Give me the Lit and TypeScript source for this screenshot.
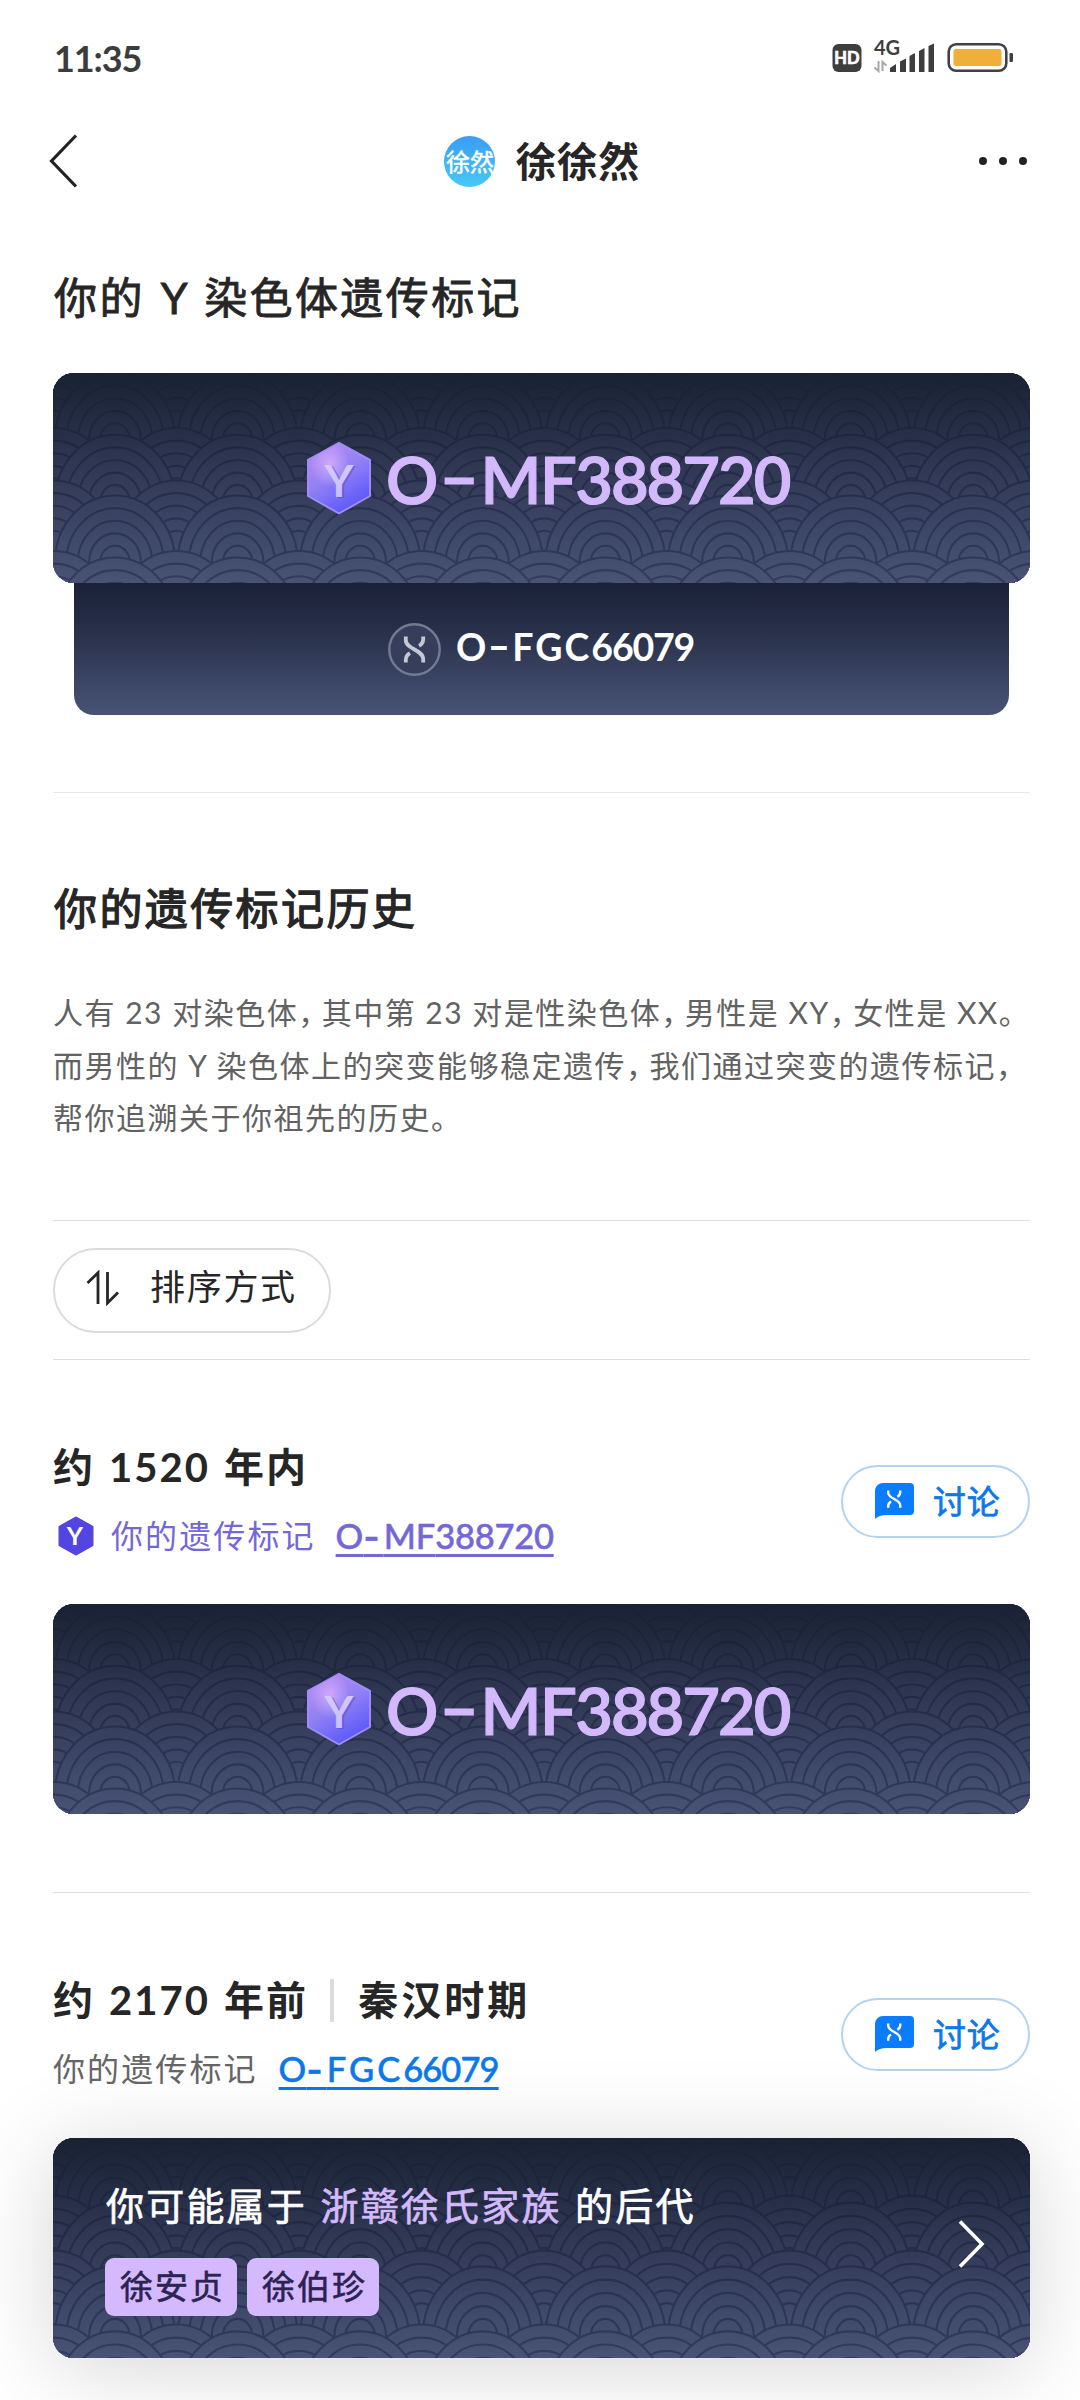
import { LitElement, html, svg, css } from "lit";
import { customElement, property } from "lit/decorators.js";

const helix = svg`
  <path d="M1.8 0 V3.4 C1.8 13 19.2 13 19.2 22.6 V26" />
  <path d="M19.2 0 V2.6 C19.2 6 17.6 8 15 9.4" />
  <path d="M1.8 26 V23.4 C1.8 20 3.4 18 6 16.6" />
`;

/* Splits "O-MF388720" into its haplogroup, letters and digits, which are spaced separately. */
const markerCode = (code: string) => {
  const [head, tail] = code.split("-");
  const letters = tail.replace(/\d/g, "");
  const digits = tail.replace(/\D/g, "");
  return html`${head}<span class="dash">-</span><span class="letters">${letters}</span><span class="digits">${digits}</span>`;
};

/* Seigaiha waves: rows are painted back to front, each arc hides the row behind it. */
const ROWS: Array<[number, boolean]> = [
  [-62, false], [-13, true], [0, false], [55, true], [61.7, false],
  [107.5, true], [122.5, false], [178, true], [184.5, false],
];
const RINGS = [1, 0.81, 0.62, 0.43, 0.245];
const PITCH = 122.6;

@customElement("wave-pattern")
class WavePattern extends LitElement {
  static styles = css`
    :host { position: absolute; inset: 0; display: block; }
    svg { display: block; width: 100%; height: 100%; }
  `;
  render() {
    const arcs = ROWS.map(([top, shifted]) => {
      const row = [];
      for (let i = -1; i < 9; i++) {
        const cx = 62 + i * PITCH + (shifted ? PITCH / 2 : 0);
        for (const k of RINGS) {
          row.push(svg`<ellipse cx=${cx} cy=${top + 66.5} rx=${60 * k} ry=${66.5 * k} />`);
        }
      }
      return row;
    });
    return html`
      <svg viewBox="0 0 977 210" preserveAspectRatio="none">
        <defs>
          <linearGradient id="f" gradientUnits="userSpaceOnUse" x1="0" y1="0" x2="0" y2="210">
            <stop offset="0" stop-color="#192133" />
            <stop offset="0.5" stop-color="#323a57" />
            <stop offset="1" stop-color="#485375" />
          </linearGradient>
          <linearGradient id="s" gradientUnits="userSpaceOnUse" x1="0" y1="0" x2="0" y2="210">
            <stop offset="0" stop-color="#192133" />
            <stop offset="0.3" stop-color="#1f2640" />
            <stop offset="0.6" stop-color="#282f4d" />
            <stop offset="1" stop-color="#333b5f" />
          </linearGradient>
        </defs>
        <rect width="977" height="210" fill="url(#f)" />
        <g fill="url(#f)" stroke="url(#s)" stroke-width="2.1">${arcs}</g>
      </svg>
    `;
  }
}

@customElement("marker-card")
class MarkerCard extends LitElement {
  @property() code = "";
  static styles = css`
    :host { display: block; position: relative; height: 210px; border-radius: 21px; overflow: hidden; }
    .row { position: relative; display: flex; align-items: center; height: 100%; box-sizing: border-box; padding: 0 0 0 249px; }
    .hex { width: 74px; height: 86px; display: block; }
    .code { margin-left: 10px; padding-top: 1px; font-size: 65px; line-height: 80px; font-weight: 600; color: #d3b9fb; -webkit-text-stroke: 1.2px; white-space: nowrap; }
    .dash { display: inline-block; margin: 0 9px; transform: translateY(-0.04em) scaleX(1.65); }
    .letters { letter-spacing: -1.5px; }
    .digits { letter-spacing: -2px; }
    text { font-family: Lato, sans-serif; font-weight: 700; }
  `;
  render() {
    return html`
      <wave-pattern></wave-pattern>
      <div class="row">
        <svg class="hex" viewBox="0 0 74 86">
          <defs>
            <linearGradient id="h" x1="0.2" y1="0.05" x2="0.7" y2="1">
              <stop offset="0" stop-color="#b98af2" />
              <stop offset="0.45" stop-color="#9180f4" />
              <stop offset="1" stop-color="#5654fb" />
            </linearGradient>
            <radialGradient id="g" cx="0.35" cy="0.3" r="0.32">
              <stop offset="0" stop-color="#dcb4ff" stop-opacity="0.75" />
              <stop offset="1" stop-color="#dcb4ff" stop-opacity="0" />
            </radialGradient>
            <linearGradient id="y" x1="0" y1="0" x2="0" y2="1">
              <stop offset="0" stop-color="#d9cdfb" />
              <stop offset="1" stop-color="#c3bcff" />
            </linearGradient>
          </defs>
          <path d="M37 8 L68 25 V61 L37 78.500 L6 61 V25 Z" fill="url(#h)" stroke="#a08cf8" stroke-width="2" stroke-linejoin="round" />
          <path d="M37 8 L68 25 V61 L37 78.500 L6 61 V25 Z" fill="url(#g)" />
          <text x="39" y="62.500" font-size="44.500" text-anchor="middle" fill="#5a48c8" opacity="0.5">Y</text>
          <text x="37" y="61.500" font-size="44.500" text-anchor="middle" fill="url(#y)">Y</text>
        </svg>
        <div class="code">${markerCode(this.code)}</div>
      </div>
    `;
  }
}

@customElement("discuss-button")
class DiscussButton extends LitElement {
  static styles = css`
    :host { display: block; }
    .pill { display: flex; align-items: center; box-sizing: border-box; width: 189px; height: 73px; border: 2px solid #b4d3ee; border-radius: 37px; padding-left: 32px; background: #fff; }
    svg { width: 39px; height: 36px; display: block; }
    .label { margin-left: 19px; font-size: 33px; line-height: 40px; letter-spacing: 0.8px; color: #0b79ec; -webkit-text-stroke: 0.7px #0b79ec; }
  `;
  render() {
    return html`
      <div class="pill">
        <svg viewBox="0 0 39 36">
          <path d="M8 0 H35 A4 4 0 0 1 39 4 V28 A4 4 0 0 1 35 32 H12 Q4 32 0 36 V8 A8 8 0 0 1 8 0 Z" fill="#0a7cff" />
          <g transform="translate(12 7.500) scale(0.69 0.66)" fill="none" stroke="#fff" stroke-width="3.400">${helix}</g>
        </svg>
        <div class="label">讨论</div>
      </div>
    `;
  }
}

@customElement("app-root")
class AppRoot extends LitElement {
  static styles = css`
    :host { display: block; position: relative; width: 1080px; height: 2400px; overflow: hidden; background: #fff; color: #262626; font-family: Lato, "Noto Sans CJK SC", sans-serif; }
    .status { display: flex; align-items: center; height: 116px; box-sizing: border-box; padding: 0 65px 0 54px; }
    .time { font-size: 36px; line-height: 44px; font-weight: 700; letter-spacing: -1.100px; color: #3c3c3c; flex: 1; }
    .sys { width: 184px; height: 60px; display: block; }
    .nav { display: grid; grid-template-columns: 1fr auto 1fr; align-items: center; height: 90px; padding: 0 46px 0 50px; }
    .back { width: 34px; height: 56px; display: block; margin-left: -5px; }
    .who { display: flex; align-items: center; gap: 20px; }
    .avatar { width: 51px; height: 51px; border-radius: 50%; background: linear-gradient(#3a9df2, #47c8f8); color: #fff; font-size: 24px; line-height: 51px; text-align: center; white-space: nowrap; -webkit-text-stroke: 0.5px; }
    .name { font-size: 41px; line-height: 50px; padding-top: 2px; font-weight: 700; letter-spacing: 0.4px; color: #262626; }
    .more { width: 50px; height: 10px; display: block; justify-self: end; margin-right: 6px; }
    .main { padding: 0 50px 0 53px; }
    .h { font-size: 43px; line-height: 60px; letter-spacing: 2.400px; word-spacing: 2.500px; padding-left: 1px; color: #262626; -webkit-text-stroke: 0.9px #262626; white-space: nowrap; }
    .first { margin-top: 62px; }
    .second { margin-top: 86px; -webkit-text-stroke-width: 1.3px; }
    .card { margin-top: 46px; }
    .first + .card { margin-top: 45px; }
    .sub { margin: 0 21px; height: 132px; box-sizing: border-box; border-radius: 0 0 20px 20px; background: linear-gradient(#1a2138, #2a324c 40%, #485375); display: flex; align-items: center; padding-left: 314px; }
    .sub svg { width: 53px; height: 53px; display: block; }
    .subcode { margin-left: 15px; padding-bottom: 4px; font-size: 37.500px; line-height: 50px; font-weight: 700; color: #fff; white-space: nowrap; }
    .subcode .dash { display: inline-block; margin: 0 6px; transform: translateY(-0.04em) scaleX(1.6); }
    .subcode .letters { letter-spacing: 2px; }
    .subcode .digits { letter-spacing: -1.2px; }
    .rule { height: 1px; background: #dedede; }
    .r1 { margin-top: 77px; background: #e8e8e8; }
    .r2 { margin-top: 76px; }
    .r3 { margin-top: 26px; }
    .r4 { margin-top: 78px; }
    .para { margin-top: 47px; height: 158px; font-size: 30px; line-height: 52.500px; letter-spacing: 1.500px; color: #626262; }
    .line { white-space: nowrap; }
    .comma { letter-spacing: -6.500px; }
    .sort { margin-top: 27px; width: 278px; height: 85px; box-sizing: border-box; border: 2px solid #dcdcdc; border-radius: 43px; display: flex; align-items: center; padding: 0 0 6px 31px; font-size: 35px; line-height: 44px; letter-spacing: 1.700px; color: #262626; }
    .sort svg { width: 34px; height: 36px; display: block; margin-right: 30px; }
    .sort span { padding-bottom: 4px; }
    .head { margin-top: 79px; display: flex; align-items: center; justify-content: space-between; height: 119px; }
    .title { display: flex; align-items: center; font-size: 40px; line-height: 56px; font-weight: 700; letter-spacing: 2.100px; word-spacing: 2px; white-space: nowrap; }
    .bar { width: 4px; height: 43px; background: #dcdcdc; margin: 0 24px 0 22px; }
    .era { letter-spacing: 3px; }
    .mark { display: flex; align-items: center; height: 44px; margin-top: 19px; font-size: 32px; line-height: 44px; letter-spacing: 2.100px; color: #666; white-space: nowrap; }
    .mark.own { color: #7467d8; }
    .mark svg { width: 36px; height: 40px; display: block; margin: 0 17px 0 5px; }
    .link { margin-left: 21px; font-size: 34.500px; letter-spacing: 0.3px; font-weight: 500; text-decoration: underline; text-decoration-thickness: 3px; text-underline-offset: 5px; text-decoration-skip-ink: none; -webkit-text-stroke: 0.5px; }
    .own .link { margin-left: 20px; }
    .link .dash { font-family: Inter, sans-serif; font-weight: 600; letter-spacing: 4px; }
    .link .letters { letter-spacing: 3px; }
    .link .digits { letter-spacing: -0.9px; }
    .own .link .letters { letter-spacing: 0; }
    .own .link .digits { letter-spacing: -0.3px; }
    .blue { color: #0b79ec; }
    .talk { padding-top: 5px; }
    .banner { position: absolute; left: 53px; top: 2138px; width: 977px; height: 220px; border-radius: 21px; box-shadow: 0 10px 90px rgba(0, 0, 0, 0.17); }
    .clip { position: absolute; inset: 0; border-radius: 21px; overflow: hidden; }
    .inner { position: relative; height: 100%; box-sizing: border-box; display: flex; align-items: center; justify-content: space-between; padding: 0 45px 0 52px; }
    .text { height: 100%; padding-top: 43px; box-sizing: border-box; }
    .lead { font-size: 38px; line-height: 48px; letter-spacing: 2.200px; word-spacing: 1.500px; padding-left: 1px; color: #fff; -webkit-text-stroke: 0.7px; white-space: nowrap; }
    .clan { color: #d3b9fb; }
    .tags { display: flex; gap: 10px; margin-top: 29px; }
    .tag { width: 132px; height: 58px; box-sizing: border-box; border-radius: 9px; background: #d4b9ff; color: #2b2350; font-size: 33px; line-height: 57px; letter-spacing: 2px; padding-left: 15px; -webkit-text-stroke: 0.6px; }
    .go { width: 28px; height: 50px; display: block; margin-bottom: 8px; }
    text { font-family: Lato, sans-serif; font-weight: 700; }
  `;
  render() {
    const comma = html`<span class="comma">，</span>`;
    return html`
      <div class="status">
        <div class="time">11:35</div>
        <svg class="sys" viewBox="831 28 184 60">
          <rect x="832.500" y="44" width="29" height="28" rx="6" fill="#3e3e3e" />
          <text x="847" y="64" font-size="16.500" text-anchor="middle" fill="#fff" stroke="#fff" stroke-width="0.7">HD</text>
          <text x="874" y="54.500" font-size="20" textLength="26" fill="#3e3e3e">4G</text>
          <g fill="#3e3e3e">
            <path d="M890 72 V68 L896 64 V72 Z" />
            <path d="M900 72 V61.500 L906 58.500 V72 Z" />
            <path d="M909.500 72 V56 L915 53 V72 Z" />
            <path d="M919 72 V51 L924.500 48 V72 Z" />
            <path d="M928.500 72 V46 L934 43.500 V72 Z" />
          </g>
          <path d="M878.500 61 V71 L874.500 67.500 M882.500 71 V62 L886.500 65.500" fill="none" stroke="#a8a8a8" stroke-width="2" />
          <rect x="948.700" y="44.200" width="57.600" height="26.600" rx="7.500" fill="#fffdf2" stroke="#3f4150" stroke-width="2.600" />
          <rect x="953.500" y="49" width="48" height="17" rx="2.500" fill="#f0ae3b" />
          <rect x="1009.500" y="53" width="3.500" height="9" rx="1.200" fill="#3e3e3e" />
        </svg>
      </div>
      <div class="nav">
        <svg class="back" viewBox="0 0 34 56"><path d="M31 2.500 L6.500 28 L31 53.500" fill="none" stroke="#222" stroke-width="3.200" /></svg>
        <div class="who">
          <div class="avatar">徐然</div>
          <div class="name">徐徐然</div>
        </div>
        <svg class="more" viewBox="0 0 50 10">
          <circle cx="5" cy="5" r="4" fill="#222" /><circle cx="25" cy="5" r="4" fill="#222" /><circle cx="45" cy="5" r="4" fill="#222" />
        </svg>
      </div>
      <div class="main">
        <div class="h first">你的 Y 染色体遗传标记</div>
        <marker-card class="card" code="O-MF388720"></marker-card>
        <div class="sub">
          <svg viewBox="0 0 53 53">
            <circle cx="26.500" cy="26.500" r="25.200" fill="#363e5b" stroke="#737a94" stroke-width="2.400" />
            <g transform="translate(16 13.500)" fill="none" stroke="#c3c7d6" stroke-width="3.800">${helix}</g>
          </svg>
          <div class="subcode">${markerCode("O-FGC66079")}</div>
        </div>
        <div class="rule r1"></div>
        <div class="h second">你的遗传标记历史</div>
        <div class="para">
          <div class="line">人有 23 对染色体${comma}其中第 23 对是性染色体${comma}男性是 XY${comma}女性是 XX。</div>
          <div class="line">而男性的 Y 染色体上的突变能够稳定遗传${comma}我们通过突变的遗传标记${comma}</div>
          <div class="line">帮你追溯关于你祖先的历史。</div>
        </div>
        <div class="rule r2"></div>
        <div class="sort">
          <svg viewBox="0 0 34 36"><path d="M1.500 13 L12 2.800 V34 M21.500 2 V33 L32 22.500" fill="none" stroke="#262626" stroke-width="2.800" /></svg>
          <span>排序方式</span>
        </div>
        <div class="rule r3"></div>
        <div class="head">
          <div>
            <div class="title">约 1520 年内</div>
            <div class="mark own">
              <svg viewBox="0 0 36 40">
                <path d="M18 2 L34 11 V29 L18 38 L2 29 V11 Z" fill="#5346e0" stroke="#5346e0" stroke-width="3" stroke-linejoin="round" />
                <text x="18" y="29" font-size="25" text-anchor="middle" fill="#fff">Y</text>
              </svg>
              <span>你的遗传标记</span>
              <span class="link">${markerCode("O-MF388720")}</span>
            </div>
          </div>
          <discuss-button class="talk"></discuss-button>
        </div>
        <marker-card class="card" code="O-MF388720"></marker-card>
        <div class="rule r4"></div>
        <div class="head">
          <div>
            <div class="title"><span>约 2170 年前</span><span class="bar"></span><span class="era">秦汉时期</span></div>
            <div class="mark">
              <span>你的遗传标记</span>
              <span class="link blue">${markerCode("O-FGC66079")}</span>
            </div>
          </div>
          <discuss-button class="talk"></discuss-button>
        </div>
      </div>
      <div class="banner">
        <div class="clip"><wave-pattern></wave-pattern></div>
        <div class="inner">
          <div class="text">
            <div class="lead">你可能属于 <span class="clan">浙赣徐氏家族</span> 的后代</div>
            <div class="tags"><div class="tag">徐安贞</div><div class="tag">徐伯珍</div></div>
          </div>
          <svg class="go" viewBox="0 0 28 50"><path d="M3 2.500 L25 25 L3 47.500" fill="none" stroke="#fff" stroke-width="3.600" /></svg>
        </div>
      </div>
    `;
  }
}
